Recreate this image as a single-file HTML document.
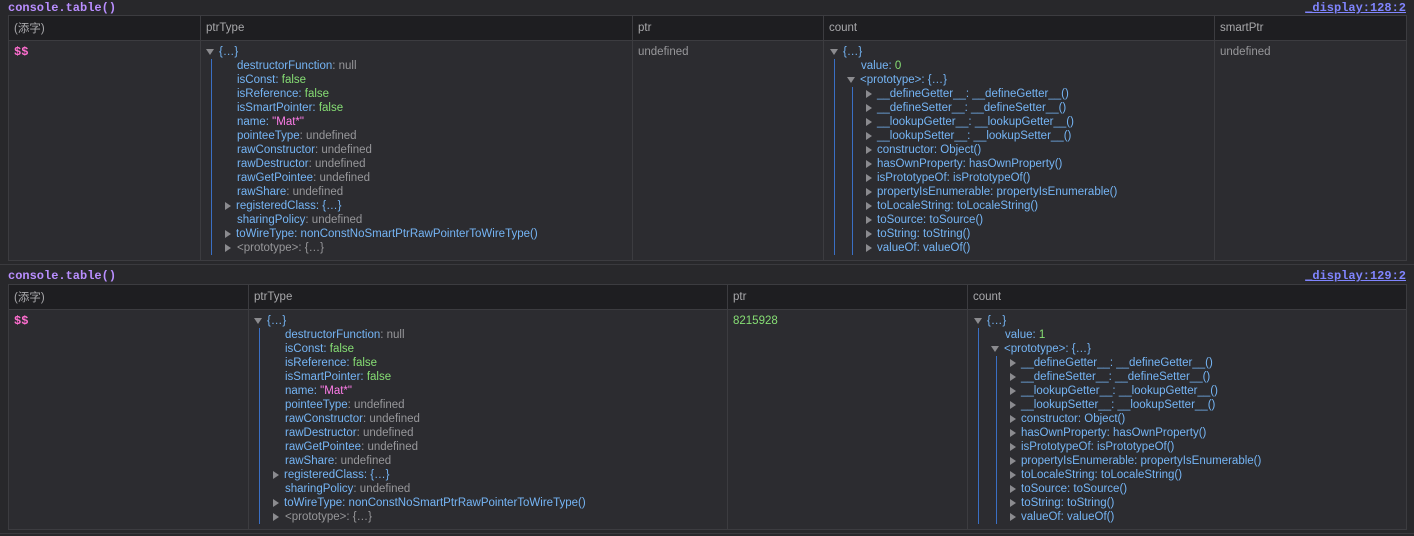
<!DOCTYPE html>
<html><head><meta charset="utf-8"><style>
*{margin:0;padding:0;box-sizing:border-box}
body{width:1414px;height:536px;background:#28282b;font-family:"Liberation Sans","Noto Sans CJK SC",sans-serif;font-size:11.5px;color:#b1b1b3;position:relative;overflow:hidden}
.mono{font-family:"Liberation Mono",monospace;font-size:12px;font-weight:bold}
.title{position:absolute;left:8px;color:#b98eff}
.link{position:absolute;right:8px;color:#8085ff;text-decoration:underline}
.sep{position:absolute;left:0;width:1414px;height:1px;background:#3a3a3e}
table{position:absolute;left:8px;width:1398px;border-collapse:collapse;table-layout:fixed}
th{background:#1e1e21;height:25px;text-align:left;font-weight:normal;color:#a8a8ab;padding:0 5px;border:1px solid #3c3c40;font-size:11.5px}
td{background:#2c2c30;vertical-align:top;padding:4px 0 0 0;border:1px solid #3c3c40;position:relative}
.l{height:14px;line-height:14px;white-space:nowrap;position:relative}
.k{color:#75b5f5}.g{color:#97979a}.f{color:#86de74}.s{color:#ff7de9}.n{color:#86de74}
.pk{color:#ff6ed0;font-weight:bold;font-family:"Liberation Mono",monospace;font-size:12px}
.ad,.ar{position:absolute;width:0;height:0}
.ad{border-left:4px solid transparent;border-right:4px solid transparent;border-top:6px solid #8b8b8f;top:4px}
.ar{border-top:4px solid transparent;border-bottom:4px solid transparent;border-left:6px solid #8b8b8f;top:3px}
.vl{position:absolute;width:1px;background:#3a6fc4}
</style></head><body>

<div class="title mono" style="top:1px">console.table()</div>
<div class="link mono" style="top:1px">_display:128:2</div>
<table style="top:15px">
<colgroup><col style="width:192px"><col style="width:432px"><col style="width:191px"><col style="width:391px"><col style="width:192px"></colgroup>
<tr><th>(添字)</th><th>ptrType</th><th>ptr</th><th>count</th><th>smartPtr</th></tr>
<tr style="height:220px">
<td><div class="l" style="padding-left:5px"><span class="pk">$$</span></div></td>
<td>
<div class="vl" style="left:10px;top:18px;height:196px"></div>
<div class="l" style="padding-left:18px"><span class="ad" style="left:5px"></span><span class="k">{…}</span></div>
<div class="l" style="padding-left:36px"><span class="k">destructorFunction</span><span class="g">: null</span></div>
<div class="l" style="padding-left:36px"><span class="k">isConst</span><span class="k">: </span><span class="f">false</span></div>
<div class="l" style="padding-left:36px"><span class="k">isReference: </span><span class="f">false</span></div>
<div class="l" style="padding-left:36px"><span class="k">isSmartPointer: </span><span class="f">false</span></div>
<div class="l" style="padding-left:36px"><span class="k">name: </span><span class="s">"Mat*"</span></div>
<div class="l" style="padding-left:36px"><span class="k">pointeeType</span><span class="g">: undefined</span></div>
<div class="l" style="padding-left:36px"><span class="k">rawConstructor</span><span class="g">: undefined</span></div>
<div class="l" style="padding-left:36px"><span class="k">rawDestructor</span><span class="g">: undefined</span></div>
<div class="l" style="padding-left:36px"><span class="k">rawGetPointee</span><span class="g">: undefined</span></div>
<div class="l" style="padding-left:36px"><span class="k">rawShare</span><span class="g">: undefined</span></div>
<div class="l" style="padding-left:35px"><span class="ar" style="left:24px"></span><span class="k">registeredClass: {…}</span></div>
<div class="l" style="padding-left:36px"><span class="k">sharingPolicy</span><span class="g">: undefined</span></div>
<div class="l" style="padding-left:35px"><span class="ar" style="left:24px"></span><span class="k">toWireType: nonConstNoSmartPtrRawPointerToWireType()</span></div>
<div class="l" style="padding-left:36px"><span class="ar" style="left:24px"></span><span class="g">&lt;prototype&gt;: {…}</span></div>
</td>
<td><div class="l" style="padding-left:5px"><span class="g">undefined</span></div></td>
<td>
<div class="vl" style="left:10px;top:18px;height:196px"></div>
<div class="vl" style="left:28px;top:46px;height:168px"></div>
<div class="l" style="padding-left:19px"><span class="ad" style="left:6px"></span><span class="k">{…}</span></div>
<div class="l" style="padding-left:37px"><span class="k">value: </span><span class="n">0</span></div>
<div class="l" style="padding-left:36px"><span class="ad" style="left:23px"></span><span class="k">&lt;prototype&gt;: {…}</span></div>
<div class="l" style="padding-left:53px"><span class="ar" style="left:42px"></span><span class="k">__defineGetter__: __defineGetter__()</span></div>
<div class="l" style="padding-left:53px"><span class="ar" style="left:42px"></span><span class="k">__defineSetter__: __defineSetter__()</span></div>
<div class="l" style="padding-left:53px"><span class="ar" style="left:42px"></span><span class="k">__lookupGetter__: __lookupGetter__()</span></div>
<div class="l" style="padding-left:53px"><span class="ar" style="left:42px"></span><span class="k">__lookupSetter__: __lookupSetter__()</span></div>
<div class="l" style="padding-left:53px"><span class="ar" style="left:42px"></span><span class="k">constructor: Object()</span></div>
<div class="l" style="padding-left:53px"><span class="ar" style="left:42px"></span><span class="k">hasOwnProperty: hasOwnProperty()</span></div>
<div class="l" style="padding-left:53px"><span class="ar" style="left:42px"></span><span class="k">isPrototypeOf: isPrototypeOf()</span></div>
<div class="l" style="padding-left:53px"><span class="ar" style="left:42px"></span><span class="k">propertyIsEnumerable: propertyIsEnumerable()</span></div>
<div class="l" style="padding-left:53px"><span class="ar" style="left:42px"></span><span class="k">toLocaleString: toLocaleString()</span></div>
<div class="l" style="padding-left:53px"><span class="ar" style="left:42px"></span><span class="k">toSource: toSource()</span></div>
<div class="l" style="padding-left:53px"><span class="ar" style="left:42px"></span><span class="k">toString: toString()</span></div>
<div class="l" style="padding-left:53px"><span class="ar" style="left:42px"></span><span class="k">valueOf: valueOf()</span></div>
</td>
<td><div class="l" style="padding-left:5px"><span class="g">undefined</span></div></td>
</tr></table>

<div class="sep" style="top:264px"></div>
<div class="title mono" style="top:269px">console.table()</div>
<div class="link mono" style="top:269px">_display:129:2</div>
<table style="top:284px">
<colgroup><col style="width:240px"><col style="width:479px"><col style="width:240px"><col style="width:439px"></colgroup>
<tr><th>(添字)</th><th>ptrType</th><th>ptr</th><th>count</th></tr>
<tr style="height:220px">
<td><div class="l" style="padding-left:5px"><span class="pk">$$</span></div></td>
<td>
<div class="vl" style="left:10px;top:18px;height:196px"></div>
<div class="l" style="padding-left:18px"><span class="ad" style="left:5px"></span><span class="k">{…}</span></div>
<div class="l" style="padding-left:36px"><span class="k">destructorFunction</span><span class="g">: null</span></div>
<div class="l" style="padding-left:36px"><span class="k">isConst: </span><span class="f">false</span></div>
<div class="l" style="padding-left:36px"><span class="k">isReference: </span><span class="f">false</span></div>
<div class="l" style="padding-left:36px"><span class="k">isSmartPointer: </span><span class="f">false</span></div>
<div class="l" style="padding-left:36px"><span class="k">name: </span><span class="s">"Mat*"</span></div>
<div class="l" style="padding-left:36px"><span class="k">pointeeType</span><span class="g">: undefined</span></div>
<div class="l" style="padding-left:36px"><span class="k">rawConstructor</span><span class="g">: undefined</span></div>
<div class="l" style="padding-left:36px"><span class="k">rawDestructor</span><span class="g">: undefined</span></div>
<div class="l" style="padding-left:36px"><span class="k">rawGetPointee</span><span class="g">: undefined</span></div>
<div class="l" style="padding-left:36px"><span class="k">rawShare</span><span class="g">: undefined</span></div>
<div class="l" style="padding-left:35px"><span class="ar" style="left:24px"></span><span class="k">registeredClass: {…}</span></div>
<div class="l" style="padding-left:36px"><span class="k">sharingPolicy</span><span class="g">: undefined</span></div>
<div class="l" style="padding-left:35px"><span class="ar" style="left:24px"></span><span class="k">toWireType: nonConstNoSmartPtrRawPointerToWireType()</span></div>
<div class="l" style="padding-left:36px"><span class="ar" style="left:24px"></span><span class="g">&lt;prototype&gt;: {…}</span></div>
</td>
<td><div class="l" style="padding-left:5px"><span class="n">8215928</span></div></td>
<td>
<div class="vl" style="left:10px;top:18px;height:196px"></div>
<div class="vl" style="left:28px;top:46px;height:168px"></div>
<div class="l" style="padding-left:19px"><span class="ad" style="left:6px"></span><span class="k">{…}</span></div>
<div class="l" style="padding-left:37px"><span class="k">value: </span><span class="n">1</span></div>
<div class="l" style="padding-left:36px"><span class="ad" style="left:23px"></span><span class="k">&lt;prototype&gt;: {…}</span></div>
<div class="l" style="padding-left:53px"><span class="ar" style="left:42px"></span><span class="k">__defineGetter__: __defineGetter__()</span></div>
<div class="l" style="padding-left:53px"><span class="ar" style="left:42px"></span><span class="k">__defineSetter__: __defineSetter__()</span></div>
<div class="l" style="padding-left:53px"><span class="ar" style="left:42px"></span><span class="k">__lookupGetter__: __lookupGetter__()</span></div>
<div class="l" style="padding-left:53px"><span class="ar" style="left:42px"></span><span class="k">__lookupSetter__: __lookupSetter__()</span></div>
<div class="l" style="padding-left:53px"><span class="ar" style="left:42px"></span><span class="k">constructor: Object()</span></div>
<div class="l" style="padding-left:53px"><span class="ar" style="left:42px"></span><span class="k">hasOwnProperty: hasOwnProperty()</span></div>
<div class="l" style="padding-left:53px"><span class="ar" style="left:42px"></span><span class="k">isPrototypeOf: isPrototypeOf()</span></div>
<div class="l" style="padding-left:53px"><span class="ar" style="left:42px"></span><span class="k">propertyIsEnumerable: propertyIsEnumerable()</span></div>
<div class="l" style="padding-left:53px"><span class="ar" style="left:42px"></span><span class="k">toLocaleString: toLocaleString()</span></div>
<div class="l" style="padding-left:53px"><span class="ar" style="left:42px"></span><span class="k">toSource: toSource()</span></div>
<div class="l" style="padding-left:53px"><span class="ar" style="left:42px"></span><span class="k">toString: toString()</span></div>
<div class="l" style="padding-left:53px"><span class="ar" style="left:42px"></span><span class="k">valueOf: valueOf()</span></div>
</td>
</tr></table>
<div class="sep" style="top:533px"></div>
</body></html>
